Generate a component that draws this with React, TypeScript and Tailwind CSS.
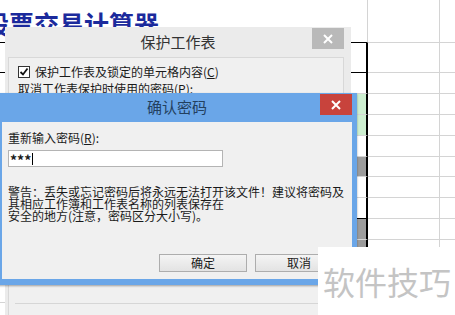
const cjk = "font-['Noto_Sans_CJK_SC','Noto_Sans',sans-serif]";

type Row = { h: string; fill: string; dark?: boolean; top?: boolean };

const rows: Row[] = [
  { h: "h-[43px]", fill: "bg-white", dark: true, top: true },
  { h: "h-[30px]", fill: "bg-white", dark: true },
  { h: "h-[21px]", fill: "bg-white" },
  { h: "h-[21px]", fill: "bg-[#cdefd0]" },
  { h: "h-[21px]", fill: "bg-[#cdefd0]" },
  { h: "h-[21px]", fill: "bg-white" },
  { h: "h-[20px]", fill: "bg-[#9c9c9c]" },
  { h: "h-[21px]", fill: "bg-white" },
  { h: "h-[21px]", fill: "bg-white", dark: true },
  { h: "h-[21px]", fill: "bg-[#9c9c9c]" },
  { h: "h-[21px]", fill: "bg-[#9c9c9c]" },
  { h: "h-[21px]", fill: "bg-white" },
  { h: "h-[21px]", fill: "bg-white" },
  { h: "h-[21px]", fill: "bg-white" },
];

function CloseIcon() {
  return (
    <svg width="10" height="10" viewBox="0 0 10 10">
      <path d="M1 1 L9 9 M9 1 L1 9" stroke="white" strokeWidth="2" />
    </svg>
  );
}

function Sheet() {
  return (
    <div className="flex flex-col">
      {rows.map((r, i) => (
        <div key={i} className={`flex ${r.h}`}>
          <div
            className={`w-[357px] shrink-0 overflow-hidden border-b ${
              r.dark ? "border-black" : "border-[#d4d4d4]"
            }`}
          >
            {r.top && (
              <div
                className={`ml-[-16px] pt-[11px] whitespace-nowrap text-[25px] leading-[25px] font-bold text-[#1b2a9c] ${cjk}`}
              >
                股票交易计算器
              </div>
            )}
          </div>
          <div
            className={`w-[11px] shrink-0 border-b ${r.fill} ${
              r.top
                ? "border-r border-r-[#d4d4d4] border-b-black"
                : r.dark
                ? "border-r-2 border-black"
                : "border-r-2 border-r-black border-b-[#d4d4d4]"
            }`}
          />
          <div className="w-[72px] shrink-0 border-r border-b border-[#d4d4d4]" />
          <div className="flex-1 border-b border-[#d4d4d4]" />
        </div>
      ))}
    </div>
  );
}

function ProtectDialog() {
  return (
    <div className={`absolute left-[5px] top-[27px] w-[346px] h-[300px] bg-[#ebebeb] flex flex-col ${cjk}`}>
      <div className="relative h-[30px] shrink-0 flex items-center justify-center text-[15px] text-[#333]">
        保护工作表
        <div className="absolute right-[7px] top-[1px] w-[32px] h-[21px] bg-[#b9b9b9] flex items-center justify-center">
          <CloseIcon />
        </div>
      </div>
      <div className="flex-1 ml-[3px] mr-[7px] bg-[#f0f0f0] border border-[#d8d8d8] pl-[9px] pt-[8px] text-[12px] text-[#1a1a1a]">
        <div className="flex items-center gap-[5px] h-[12px]">
          <div className="w-[12px] h-[12px] border border-[#333] bg-white flex items-center justify-center">
            <svg width="10" height="10" viewBox="0 0 10 10">
              <path d="M1.5 5 L4 7.5 L8.5 1.5" stroke="#111" strokeWidth="1.8" fill="none" />
            </svg>
          </div>
          <span className="whitespace-nowrap leading-[12px]">
            保护工作表及锁定的单元格内容(<span className="underline">C</span>)
          </span>
        </div>
        <div className="mt-[5px] leading-[12px] whitespace-nowrap">
          取消工作表保护时使用的密码(<span className="underline">P</span>):
        </div>
        <div className="mt-[208px] ml-[-3px] border-t border-[#d6d6d6] h-[10px]" />
      </div>
    </div>
  );
}

function ConfirmDialog() {
  return (
    <div
      className={`absolute left-[-3px] top-[93px] w-[360px] h-[192px] bg-[#6aa6e8] flex flex-col shadow-[0_1px_2px_rgba(0,0,0,0.35)] ${cjk}`}
    >
      <div className="relative h-[29px] shrink-0 flex items-center justify-center text-[15px] text-[#23405e]">
        确认密码
        <div className="absolute right-[5px] top-[1px] w-[32px] h-[21px] bg-[#c8433c] flex items-center justify-center">
          <CloseIcon />
        </div>
      </div>
      <div className="flex-1 ml-[5px] mr-[5px] mb-[6px] bg-[#f0f0f0] pl-[6px] pt-[8px] text-[12px] text-[#1a1a1a] flex flex-col">
        <div className="leading-[16px] whitespace-nowrap">
          重新输入密码(<span className="underline">R</span>):
        </div>
        <div className="mt-[4px] w-[215px] h-[17px] bg-white border border-[#b4b4b4] flex items-center pl-[1px]">
          <span className="text-[14px] font-bold leading-[12px] pt-[3px]">***</span>
          <span className="ml-[1px] w-px h-[12px] bg-black" />
        </div>
        <div className="mt-[19px] leading-[12px] whitespace-nowrap">
          <div>警告：丢失或忘记密码后将永远无法打开该文件！建议将密码及</div>
          <div>其相应工作簿和工作表名称的列表保存在</div>
          <div>安全的地方(注意，密码区分大小写)。</div>
        </div>
        <div className="mt-[32px] flex justify-end gap-[8px] pr-[9px]">
          <div className="w-[88px] h-[18px] border border-[#adadad] bg-gradient-to-b from-[#f4f4f4] to-[#e3e3e3] flex items-center justify-center">
            确定
          </div>
          <div className="w-[88px] h-[18px] border border-[#adadad] bg-gradient-to-b from-[#f4f4f4] to-[#e3e3e3] flex items-center justify-center">
            取消
          </div>
        </div>
      </div>
    </div>
  );
}

export default function App() {
  return (
    <div className="relative w-[455px] h-[315px] overflow-hidden bg-white">
      <Sheet />
      <ProtectDialog />
      <ConfirmDialog />
      <div className="absolute left-[318px] top-[247px] right-0 bottom-0 bg-white flex items-center pl-[5px]">
        <span className={`text-[32px] leading-[32px] text-[#c4c4c4] whitespace-nowrap ${cjk}`}>
          软件技巧
        </span>
      </div>
    </div>
  );
}
